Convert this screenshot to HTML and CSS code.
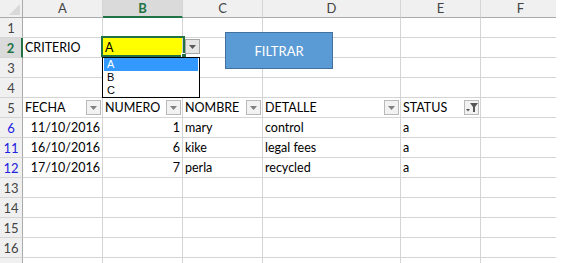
FILE: index.html
```html
<!DOCTYPE html>
<html lang="es">
<head>
  <meta charset="UTF-8" />
  <title>Filtro</title>
  <link rel="stylesheet" href="styles.css">
</head>
<body>

  <div class="sheet">
    <div class="grid">
      <!-- column headers -->
      <div class="corner"><span class="tri"></span></div>
      <div class="colh">A</div>
      <div class="colh sel">B</div>
      <div class="colh">C</div>
      <div class="colh">D</div>
      <div class="colh">E</div>
      <div class="colh">F</div>

      <div class="rowh">1</div>
      <div class="c"></div><div class="c"></div><div class="c"></div><div class="c"></div><div class="c"></div><div class="c"></div>

      <div class="rowh sel">2</div>
      <div class="c">CRITERIO</div><div class="c yellow">A</div><div class="c"></div><div class="c"></div><div class="c"></div><div class="c"></div>

      <div class="rowh">3</div>
      <div class="c"></div><div class="c"></div><div class="c"></div><div class="c"></div><div class="c"></div><div class="c"></div>

      <div class="rowh">4</div>
      <div class="c"></div><div class="c"></div><div class="c"></div><div class="c"></div><div class="c"></div><div class="c"></div>

      <div class="rowh">5</div>
      <div class="c head">FECHA<span class="fbtn"><svg width="7" height="4" viewBox="0 0 7 4"><polygon points="0,0 7,0 3.5,4" fill="#808080"/></svg></span></div>
      <div class="c head">NUMERO<span class="fbtn"><svg width="7" height="4" viewBox="0 0 7 4"><polygon points="0,0 7,0 3.5,4" fill="#808080"/></svg></span></div>
      <div class="c head">NOMBRE<span class="fbtn"><svg width="7" height="4" viewBox="0 0 7 4"><polygon points="0,0 7,0 3.5,4" fill="#808080"/></svg></span></div>
      <div class="c head">DETALLE<span class="fbtn"><svg width="7" height="4" viewBox="0 0 7 4"><polygon points="0,0 7,0 3.5,4" fill="#808080"/></svg></span></div>
      <div class="c head">STATUS<span class="fbtn"><svg width="12" height="11" viewBox="0 0 12 11"><polygon points="0,7 4,7 2,9.5" fill="#555"/><polygon points="4,1 12,1 9,5 9,10 7,10 7,5" fill="#555"/></svg></span></div>
      <div class="c"></div>

      <div class="rowh hit">6</div>
      <div class="c num">11/10/2016</div><div class="c num">1</div><div class="c">mary</div><div class="c">control</div><div class="c">a</div><div class="c"></div>

      <div class="rowh hit">11</div>
      <div class="c num">16/10/2016</div><div class="c num">6</div><div class="c">kike</div><div class="c">legal fees</div><div class="c">a</div><div class="c"></div>

      <div class="rowh hit">12</div>
      <div class="c num">17/10/2016</div><div class="c num">7</div><div class="c">perla</div><div class="c">recycled</div><div class="c">a</div><div class="c"></div>

      <div class="rowh">13</div>
      <div class="c"></div><div class="c"></div><div class="c"></div><div class="c"></div><div class="c"></div><div class="c"></div>

      <div class="rowh">14</div>
      <div class="c"></div><div class="c"></div><div class="c"></div><div class="c"></div><div class="c"></div><div class="c"></div>

      <div class="rowh">15</div>
      <div class="c"></div><div class="c"></div><div class="c"></div><div class="c"></div><div class="c"></div><div class="c"></div>

      <div class="rowh">16</div>
      <div class="c"></div><div class="c"></div><div class="c"></div><div class="c"></div><div class="c"></div><div class="c"></div>

      <div class="rowh"></div>
      <div class="c"></div><div class="c"></div><div class="c"></div><div class="c"></div><div class="c"></div><div class="c"></div>
    </div>

    <!-- selected cell B2 with validation list -->
    <div class="cellsel"><span class="handle"></span></div>
    <div class="ddbtn"><svg width="7" height="4" viewBox="0 0 7 4"><polygon points="0,0 7,0 3.5,4" fill="#595959"/></svg></div>
    <div class="ddlist">
      <div class="opt active">A</div>
      <div class="opt">B</div>
      <div class="opt">C</div>
    </div>

    <!-- shape button -->
    <div class="filtrar">FILTRAR</div>
  </div>

</body>
</html>
```

FILE: styles.css
```css
* {
  box-sizing: border-box;
}
html, body {
  margin: 0;
  padding: 0;
  background-color: #fff;
  overflow: hidden;
}
body {
  font-family: Lato, 'Liberation Sans', sans-serif;
  font-size: 12.5px;
  color: #000;
}
.sheet {
  position: relative;
  width: 556px;
  height: 263px;
  overflow: hidden;
}
.grid {
  display: grid;
  grid-template-columns: 23px 80px 80px 80px 138px 80px 80px;
  grid-template-rows: 18px;
  grid-auto-rows: 20px;
  width: 561px;
}

/* headers */
.corner {
  background-color: #f0f0f0;
  border-right: 1px solid #ababab;
  border-bottom: 1px solid #ababab;
  display: flex;
  justify-content: flex-end;
  align-items: flex-end;
  padding: 0 2px 2px 0;
}
.corner .tri {
  width: 0;
  height: 0;
  border-left: 11px solid transparent;
  border-bottom: 11px solid #d9d9d9;
}
.colh {
  background-color: #f0f0f0;
  border-right: 1px solid #d5d5d5;
  border-bottom: 1px solid #ababab;
  text-align: center;
  color: #444;
  font-size: 13px;
  line-height: 17px;
}
.colh.sel {
  background-color: #dadada;
  color: #217346;
  font-weight: bold;
  border-bottom: 2px solid #217346;
  line-height: 16px;
}
.rowh {
  background-color: #f0f0f0;
  border-right: 1px solid #ababab;
  border-bottom: 1px solid #d5d5d5;
  text-align: center;
  color: #444;
  font-size: 13px;
  line-height: 20px;
}
.rowh.sel {
  background-color: #dadada;
  color: #217346;
  font-weight: bold;
  border-right: 2px solid #217346;
}
.rowh.hit {
  color: #2020e0;
}

/* cells */
.c {
  border-right: 1px solid #d4d4d4;
  border-bottom: 1px solid #d4d4d4;
  padding: 0 2px;
  line-height: 20px;
  white-space: nowrap;
  overflow: hidden;
}
.c.num {
  text-align: right;
}
.c.yellow {
  background-color: #ffff00;
}
.c.head {
  display: flex;
  justify-content: space-between;
  align-items: center;
  padding-right: 1px;
}
.fbtn {
  width: 15px;
  height: 15px;
  background-color: #f2f2f2;
  border: 1px solid #b9b9b9;
  display: flex;
  align-items: center;
  justify-content: center;
}

/* B2 selection and data validation list */
.cellsel {
  position: absolute;
  left: 101px;
  top: 36px;
  width: 84px;
  height: 21px;
  border: 2px solid #217346;
}
.cellsel .handle {
  position: absolute;
  right: -4px;
  bottom: -4px;
  width: 6px;
  height: 6px;
  background-color: #217346;
  border: 1px solid #fff;
}
.ddbtn {
  position: absolute;
  left: 185px;
  top: 39px;
  width: 15px;
  height: 15px;
  background-color: #e5e5e5;
  border: 1px solid #a6a6a6;
  display: flex;
  align-items: center;
  justify-content: center;
}
.ddlist {
  position: absolute;
  left: 102px;
  top: 57px;
  width: 98px;
  height: 41px;
  border: 1px solid #000;
  background-color: #fff;
  padding: 0 1px;
  font-family: 'Liberation Sans', sans-serif;
  font-size: 11px;
}
.opt {
  height: 13px;
  line-height: 13px;
  padding-left: 3px;
}
.opt.active {
  background-color: #3399ff;
  color: #fff;
}

/* FILTRAR shape */
.filtrar {
  position: absolute;
  left: 225px;
  top: 32px;
  width: 108px;
  height: 37px;
  background-color: #5b9bd5;
  border: 1px solid #41719c;
  color: #fff;
  font-size: 13px;
  display: flex;
  align-items: center;
  justify-content: center;
}
```
